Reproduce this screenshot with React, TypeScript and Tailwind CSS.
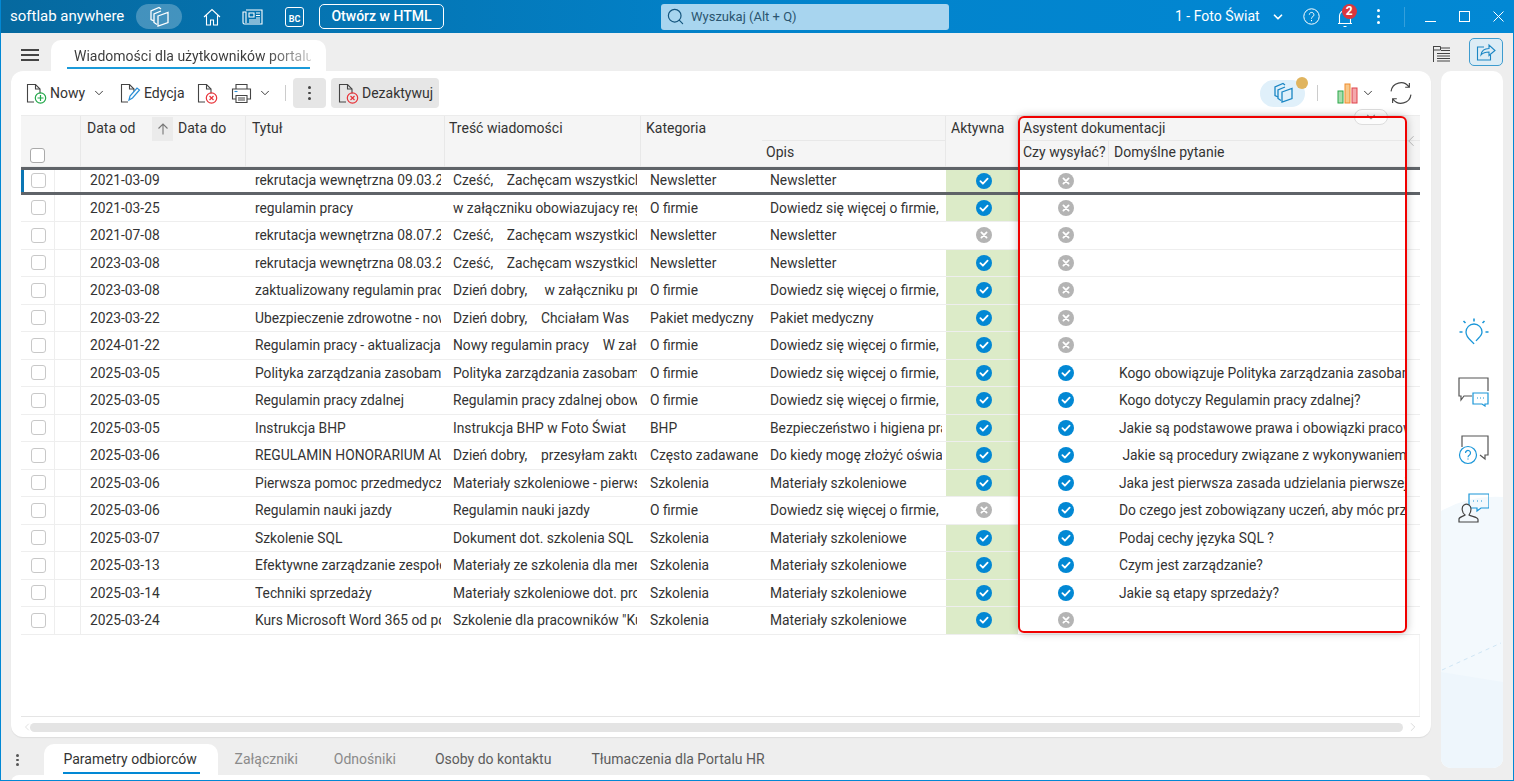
import { ChevronDown, ChevronLeft, ChevronRight, Search } from "lucide-react";

type Row = {
  from: string;
  title: string;
  body: string;
  cat: string;
  desc: string;
  active: boolean;
  send: boolean;
  question: string;
};

const DOWIEDZ = "Dowiedz się więcej o firmie,";
const MATERIALY = "Materiały szkoleniowe";
const ZACHETA = "Cześć,    Zachęcam wszystkich do udziału";

const rows: Row[] = [
  { from: "2021-03-09", title: "rekrutacja wewnętrzna 09.03.2021", body: ZACHETA, cat: "Newsletter", desc: "Newsletter", active: true, send: false, question: "" },
  { from: "2021-03-25", title: "regulamin pracy", body: "w załączniku obowiazujacy regulamin pracy", cat: "O firmie", desc: DOWIEDZ, active: true, send: false, question: "" },
  { from: "2021-07-08", title: "rekrutacja wewnętrzna 08.07.2021", body: ZACHETA, cat: "Newsletter", desc: "Newsletter", active: false, send: false, question: "" },
  { from: "2023-03-08", title: "rekrutacja wewnętrzna 08.03.2023", body: ZACHETA, cat: "Newsletter", desc: "Newsletter", active: true, send: false, question: "" },
  { from: "2023-03-08", title: "zaktualizowany regulamin pracy", body: "Dzień dobry,     w załączniku przesyłam", cat: "O firmie", desc: DOWIEDZ, active: true, send: false, question: "" },
  { from: "2023-03-22", title: "Ubezpieczenie zdrowotne - nowa oferta", body: "Dzień dobry,    Chciałam Was", cat: "Pakiet medyczny", desc: "Pakiet medyczny", active: true, send: false, question: "" },
  { from: "2024-01-22", title: "Regulamin pracy - aktualizacja", body: "Nowy regulamin pracy    W załączniku", cat: "O firmie", desc: DOWIEDZ, active: true, send: false, question: "" },
  { from: "2025-03-05", title: "Polityka zarządzania zasobami", body: "Polityka zarządzania zasobami ludzkimi", cat: "O firmie", desc: DOWIEDZ, active: true, send: true, question: "Kogo obowiązuje Polityka zarządzania zasobami ludzkimi?" },
  { from: "2025-03-05", title: "Regulamin pracy zdalnej", body: "Regulamin pracy zdalnej obowiązuje", cat: "O firmie", desc: DOWIEDZ, active: true, send: true, question: "Kogo dotyczy Regulamin pracy zdalnej?" },
  { from: "2025-03-05", title: "Instrukcja BHP", body: "Instrukcja BHP w Foto Świat", cat: "BHP", desc: "Bezpieczeństwo i higiena pracy", active: true, send: true, question: "Jakie są podstawowe prawa i obowiązki pracownika?" },
  { from: "2025-03-06", title: "REGULAMIN HONORARIUM AUTORSKIEGO", body: "Dzień dobry,    przesyłam zaktualizowany", cat: "Często zadawane pytania", desc: "Do kiedy mogę złożyć oświadczenie", active: true, send: true, question: " Jakie są procedury związane z wykonywaniem pracy?" },
  { from: "2025-03-06", title: "Pierwsza pomoc przedmedyczna", body: "Materiały szkoleniowe - pierwsza pomoc", cat: "Szkolenia", desc: MATERIALY, active: true, send: true, question: "Jaka jest pierwsza zasada udzielania pierwszej pomocy?" },
  { from: "2025-03-06", title: "Regulamin nauki jazdy", body: "Regulamin nauki jazdy", cat: "O firmie", desc: DOWIEDZ, active: false, send: true, question: "Do czego jest zobowiązany uczeń, aby móc przystąpić?" },
  { from: "2025-03-07", title: "Szkolenie SQL", body: "Dokument dot. szkolenia SQL", cat: "Szkolenia", desc: MATERIALY, active: true, send: true, question: "Podaj cechy języka SQL ?" },
  { from: "2025-03-13", title: "Efektywne zarządzanie zespołem", body: "Materiały ze szkolenia dla menedżerów", cat: "Szkolenia", desc: MATERIALY, active: true, send: true, question: "Czym jest zarządzanie?" },
  { from: "2025-03-14", title: "Techniki sprzedaży", body: "Materiały szkoleniowe dot. procesu", cat: "Szkolenia", desc: MATERIALY, active: true, send: true, question: "Jakie są etapy sprzedaży?" },
  { from: "2025-03-24", title: "Kurs Microsoft Word 365 od podstaw", body: 'Szkolenie dla pracowników "Kurs', cat: "Szkolenia", desc: MATERIALY, active: true, send: false, question: "" },
];

const GRID = "grid w-[1399px] grid-cols-[33px_27px_93px_72px_199px_196px_121px_184px_72px_91px_311px]";

function Yes() {
  return (
    <svg width="16" height="16" viewBox="0 0 16 16">
      <circle cx="8" cy="8" r="8" fill="#0288d4" />
      <path d="M4.400 8.200l2.500 2.500 4.700-5" fill="none" stroke="#fff" strokeWidth="1.800" strokeLinecap="round" strokeLinejoin="round" />
    </svg>
  );
}

function No() {
  return (
    <svg width="16" height="16" viewBox="0 0 16 16">
      <circle cx="8" cy="8" r="8" fill="#b4b4b4" />
      <path d="M5.400 5.400l5.200 5.200M10.600 5.400l-5.200 5.200" fill="none" stroke="#fff" strokeWidth="1.800" strokeLinecap="round" />
    </svg>
  );
}

function DocIcon({ children }: { children?: React.ReactNode }) {
  return (
    <svg width="21" height="21" viewBox="0 0 21 21" fill="none" className="shrink-0">
      <path d="M8 19H1.500V1.500h8l4.500 4.500v4.500" stroke="#444" strokeWidth="1.100" />
      <path d="M9.500 1.500V6H14" stroke="#444" strokeWidth="1.100" />
      {children}
    </svg>
  );
}

const addBadge = (
  <g stroke="#22a84a" strokeWidth="1.200">
    <circle cx="14.500" cy="15" r="5.200" />
    <path d="M14.500 12v6M11.500 15h6" />
  </g>
);

const removeBadge = (
  <g stroke="#e8343a" strokeWidth="1.200">
    <circle cx="14.500" cy="15" r="5.200" />
    <path d="M12.500 13l4 4M16.500 13l-4 4" />
  </g>
);

function CubesIcon({ color, size = 22 }: { color: string; size?: number }) {
  return (
    <svg width={size} height={size} viewBox="0 0 22 22" fill="none" stroke={color} strokeWidth="1.300">
      <path d="M6 15L3 13.500V5l8-3.500 2 1.500" />
      <path d="M9 18.500L6 16.500V8l7-3" />
      <path d="M10 10l10-3.500v10L10 20z" />
    </svg>
  );
}

function TopBar() {
  return (
    <div className="flex h-[33px] shrink-0 items-center bg-gradient-to-r from-[#06699f] via-[#0283cb] to-[#0288d4] pl-[9px] text-white">
      <span className="w-[116px] text-[15px] whitespace-nowrap">softlab anywhere</span>
      <div className="ml-[10px] flex h-[25px] w-[46px] items-center justify-center rounded-full bg-white/25">
        <CubesIcon color="#ffffff" />
      </div>
      <svg width="18" height="18" viewBox="0 0 18 18" fill="none" stroke="#fff" strokeWidth="1.100" className="ml-[21px]">
        <path d="M1 9l8-7.500L17 9M3.500 7.500V17h4v-5h3v5h4V7.500" />
      </svg>
      <svg width="21" height="16" viewBox="0 0 21 16" fill="none" stroke="#fff" strokeWidth="1.100" className="ml-[21px]">
        <path d="M4 1h16v14H2.500A1.500 1.500 0 0 1 1 13.500V3h3v11" />
        <path d="M7 4h5v4H7zM14 4h4M14 6.500h4M14 9h4M7 11h11M7 13h11" />
      </svg>
      <div className="ml-[22px] flex h-[20px] w-[19px] items-end justify-center rounded-[3px] border border-white pb-px text-[9px] leading-[11px] font-bold">
        BC
      </div>
      <div className="ml-[15px] flex h-[25px] w-[125px] items-center justify-center rounded-[5px] border border-white text-[14px] font-medium whitespace-nowrap">
        Otwórz w HTML
      </div>
      <div className="ml-[217px] flex h-[26px] w-[288px] items-center rounded-[3px] bg-[#a8d5ef] pl-[5px] text-[13px] text-[#2b5570]">
        <Search size={19} strokeWidth={1.500} color="#14557e" />
        <span className="ml-[6px]">Wyszukaj (Alt + Q)</span>
      </div>
      <span className="ml-[226px] text-[14px] whitespace-nowrap">1 - Foto Świat</span>
      <ChevronDown size={14} strokeWidth={3} className="ml-[11px]" />
      <svg width="17" height="17" viewBox="0 0 17 17" fill="none" stroke="#fff" strokeWidth="1" className="ml-[18px]">
        <circle cx="8.500" cy="8.500" r="7.700" />
        <path d="M6.300 6.700a2.300 2.300 0 1 1 3.500 2c-.9.500-1.300 1-1.300 2M8.500 12v1.200" />
      </svg>
      <div className="relative ml-[17px] h-[18px] w-[16px]">
        <svg width="16" height="20" viewBox="0 0 16 20" fill="none" stroke="#fff" strokeWidth="1.100">
          <path d="M1 15.500h14M2.500 15.500V8a5.500 5.500 0 0 1 11 0v7.500M6.500 18.500h3" />
        </svg>
        <span className="absolute top-[-4px] left-[5px] flex h-[15px] w-[15px] items-center justify-center rounded-full bg-[#d9363e] text-[12px] leading-none font-bold">
          2
        </span>
      </div>
      <span className="ml-[24px] flex flex-col gap-[3px]">
        <i className="block h-[3px] w-[3px] rounded-full bg-white" />
        <i className="block h-[3px] w-[3px] rounded-full bg-white" />
        <i className="block h-[3px] w-[3px] rounded-full bg-white" />
      </span>
      <div className="ml-[24px] h-[20px] w-px bg-white/20" />
      <div className="mt-[9px] ml-[20px] h-px w-[11px] bg-white" />
      <div className="ml-[23px] h-[11px] w-[11px] border border-white" />
      <svg width="11" height="11" viewBox="0 0 11 11" stroke="#fff" strokeWidth="1" className="ml-[23px]">
        <path d="M.500.500l10 10M10.500.500l-10 10" />
      </svg>
    </div>
  );
}

function TabStrip() {
  return (
    <div className="flex h-[38px] shrink-0 items-end">
      <div className="mb-[10px] ml-[20px] flex w-[18px] flex-col gap-[3px]">
        <i className="block h-[2px] bg-[#444]" />
        <i className="block h-[2px] bg-[#444]" />
        <i className="block h-[2px] bg-[#444]" />
      </div>
      <div className="relative ml-[12px] h-[31px] w-[275px] rounded-t-[10px] bg-white pt-[6px] pl-[23px] text-[14px] text-[#3a3a3a]">
        <span className="block w-[237px] overflow-hidden bg-gradient-to-r from-[#3a3a3a] from-80% to-[#cccccc] bg-clip-text font-normal whitespace-nowrap text-transparent">
          Wiadomości dla użytkowników portalu
        </span>
        <div className="absolute bottom-[2px] left-[16px] h-[2px] w-[243px] bg-[#1a9ad9]" />
      </div>
      <svg width="19" height="18" viewBox="0 0 19 18" fill="none" stroke="#444" strokeWidth="1" className="mb-[8px] ml-[1106px]">
        <path d="M1.500 1v16M1.500 1.500h7v3.500h-7M9 3h9M9 5.500h9M5 8.500h13M5 11h13M5 13.500h13M5 16h13" />
      </svg>
      <div className="mb-[5px] ml-[18px] flex h-[28px] w-[34px] items-center justify-center rounded-[5px] border border-[#3e9ccf] bg-[#dcecf5]">
        <svg width="20" height="18" viewBox="0 0 20 18" fill="none" stroke="#1a86c4" strokeWidth="1.100">
          <path d="M8 4H1.500v13h13v-5" />
          <path d="M5 12c.5-4 3.500-6.500 8-6.500V2l6 5.500-6 5V9c-3.500 0-6 .8-8 3z" />
        </svg>
      </div>
    </div>
  );
}

function Toolbar() {
  return (
    <div className="flex h-[44px] shrink-0 items-center pl-[15px] text-[14px] text-[#333]">
      <DocIcon>{addBadge}</DocIcon>
      <span className="ml-[3px] w-[35px]">Nowy</span>
      <ChevronDown size={14} strokeWidth={1.600} className="ml-[7px]" />
      <div className="ml-[14px]">
        <DocIcon>
          <path d="M9 17l1-4 7-8 2.500 2-7 8z" fill="#fff" stroke="#2b8fd6" strokeWidth="1.200" />
        </DocIcon>
      </div>
      <span className="ml-[3px] w-[39px]">Edycja</span>
      <div className="ml-[14px]">
        <DocIcon>{removeBadge}</DocIcon>
      </div>
      <svg width="21" height="21" viewBox="0 0 21 21" fill="none" stroke="#444" strokeWidth="1.100" className="ml-[13px]">
        <path d="M5 6V1.500h11V6M5 16H1.500V6h18v10H16" />
        <path d="M5 12.500h11v7H5zM7 15h7M7 17h7" />
        <path d="M3.500 8.500h3" stroke="#2b8fd6" />
      </svg>
      <ChevronDown size={14} strokeWidth={1.600} className="ml-[6px]" />
      <div className="ml-[13px] h-[16px] w-px bg-[#ccc]" />
      <div className="ml-[7px] flex h-[30px] w-[33px] flex-col items-center justify-center gap-[3px] rounded-[4px] bg-[#e6e6e6]">
        <i className="block h-[2.500px] w-[2.500px] rounded-full bg-[#444]" />
        <i className="block h-[2.500px] w-[2.500px] rounded-full bg-[#444]" />
        <i className="block h-[2.500px] w-[2.500px] rounded-full bg-[#444]" />
      </div>
      <div className="ml-[5px] flex h-[30px] w-[108px] items-center rounded-[4px] bg-[#e6e6e6] pl-[7px]">
        <DocIcon>{removeBadge}</DocIcon>
        <span className="ml-[3px]">Dezaktywuj</span>
      </div>
      <div className="relative ml-[821px] flex h-[27px] w-[45px] items-center justify-center rounded-full bg-[#e0f0fa]">
        <CubesIcon color="#1a86c4" />
        <span className="absolute top-[-3px] right-[-3px] h-[12px] w-[12px] rounded-full bg-[#e0b45e]" />
      </div>
      <div className="ml-[12px] h-[16px] w-px bg-[#ccc]" />
      <svg width="21" height="21" viewBox="0 0 21 21" className="ml-[19px]">
        <rect x="1" y="8" width="5" height="12" fill="#a8dcae" stroke="#2aa84a" />
        <rect x="8" y="1" width="5" height="19" fill="#f8c88a" stroke="#ef8b2c" />
        <rect x="15" y="5" width="5" height="15" fill="#f3a8ac" stroke="#e0434a" />
      </svg>
      <ChevronDown size={14} strokeWidth={1.600} className="ml-[3px]" />
      <svg width="22" height="22" viewBox="0 0 21 21" fill="none" stroke="#444" strokeWidth="1.100" className="ml-[15px]">
        <path d="M1 9a9.500 9.500 0 0 1 17-4.500M18.500 1v4h-4M20 12a9.500 9.500 0 0 1-17 4.500M2.500 20v-4h4" />
      </svg>
    </div>
  );
}

function HeaderRow() {
  const cell = "flex border-[#e8e8e8] text-[14px] leading-[20px] text-[#333]";
  return (
    <div className={`${GRID} h-[52px] grid-rows-[25px_27px] border-y border-[#ececec] bg-[#f5f5f5]`}>
      <div className={`${cell} col-span-2 row-span-2 items-end border-r pb-[3px] pl-[9px]`}>
        <span className="mb-[2px] h-[15px] w-[15px] rounded-[3px] border border-[#aaa] bg-white" />
      </div>
      <div className={`${cell} row-span-2 pt-[2px] pl-[6px]`}>
        <span className="flex-1">Data od</span>
        <span className="mt-[-1px] mr-[1px] flex h-[24px] w-[21px] items-center justify-center bg-[#ebebeb]">
          <svg width="12" height="12" viewBox="0 0 12 12" fill="none" stroke="#777" strokeWidth="1.100">
            <path d="M6 11.500V1M1.500 5.500L6 1l4.500 4.500" />
          </svg>
        </span>
      </div>
      <div className={`${cell} row-span-2 border-r pt-[2px] pl-[4px]`}>Data do</div>
      <div className={`${cell} row-span-2 border-r pt-[2px] pl-[6px]`}>Tytuł</div>
      <div className={`${cell} row-span-2 border-r pt-[2px] pl-[4px]`}>Treść wiadomości</div>
      <div className={`${cell} row-span-2 pt-[2px] pl-[5px]`}>Kategoria</div>
      <div className="border-r border-b border-[#e8e8e8]" />
      <div className={`${cell} row-span-2 border-r pt-[2px] pl-[5px]`}>Aktywna</div>
      <div className={`${cell} col-span-2 border-b pt-[2px] pl-[5px]`}>Asystent dokumentacji</div>
      <div className={`${cell} col-start-8 row-start-2 border-r pt-[1px] pl-[4px]`}>Opis</div>
      <div className={`${cell} col-start-10 row-start-2 border-r pt-[1px] pl-[5px] whitespace-nowrap`}>Czy wysyłać?</div>
      <div className={`${cell} col-start-11 row-start-2 pt-[1px] pl-[5px]`}>Domyślne pytanie</div>
    </div>
  );
}

function TableRow({ row, selected }: { row: Row; selected: boolean }) {
  const text = `mr-[4px] flex items-center overflow-hidden whitespace-pre ${selected ? "" : "pt-px"}`;
  return (
    <div
      className={`${GRID} relative h-[27.500px] text-[13.800px] text-[#333] ${
        selected ? "border-y-[3px] border-[#5f6368]" : "border-b border-[#eeeeee]"
      }`}
    >
      {selected && <div className="absolute top-0 bottom-0 left-0 w-[3px] bg-[#0a76b4]" />}
      <div className="flex items-center pl-[10px]">
        <span className="h-[15px] w-[15px] rounded-[3px] border border-[#c8c8c8] bg-white" />
      </div>
      <div className="border-x border-[#eeeeee]" />
      <div className={`${text} pl-[9px]`}>{row.from}</div>
      <div />
      <div className={`${text} pl-[9px]`}>{row.title}</div>
      <div className={`${text} pl-[8px]`}>{row.body}</div>
      <div className={`${text} pl-[9px]`}>{row.cat}</div>
      <div className={`${text} pl-[8px]`}>{row.desc}</div>
      <div className={`flex items-center justify-center pl-[4px] ${row.active ? "bg-[#dcebc8]" : ""}`}>
        {row.active ? <Yes /> : <No />}
      </div>
      <div className="flex items-center justify-center pl-[5px]">{row.send ? <Yes /> : <No />}</div>
      <div className={`mr-[15px] flex items-center overflow-hidden pl-[10px] whitespace-pre ${selected ? "" : "pt-px"}`}>{row.question}</div>
    </div>
  );
}

function SidePanel() {
  return (
    <div className="relative ml-[10px] flex h-[697px] w-[62px] flex-col items-center overflow-hidden rounded-[10px] bg-white pt-[247px] pl-[3px]">
      <svg width="62" height="275" viewBox="0 0 62 275" className="absolute bottom-0 left-0">
        <path d="M0 18Q28 2 62 4V275H0z" fill="#f3f9fd" />
        <path d="M0 179L62 189V275H0z" fill="#eef6fc" />
        <path d="M1 177L60 150" stroke="#cfe6f5" strokeDasharray="4 4" fill="none" />
      </svg>
      <svg width="30" height="28" viewBox="0 0 30 28" fill="none" stroke="#1a96d8" strokeWidth="1.300" className="relative">
        <path d="M15 26c-1-3-8-5-8-12a8 8 0 1 1 16 0c0 4-4 6-6 9" />
        <path d="M15 .500v3M4.500 3l2 2M25.500 3l-2 2M.500 14h3M26.500 14h3" strokeWidth="1.600" />
      </svg>
      <svg width="31" height="30" viewBox="0 0 31 30" fill="none" strokeWidth="1.200" className="relative mt-[31px]">
        <path d="M14 19H6l-3 4v-4H1V1h29v13" stroke="#555" />
        <path d="M15 16h15v11h-3v2l-3-2h-9z" stroke="#1a96d8" fill="#fff" />
        <path d="M19 21h1M22 21h1M25 21h1" stroke="#1a96d8" />
      </svg>
      <svg width="31" height="30" viewBox="0 0 31 30" fill="none" strokeWidth="1.200" className="relative mt-[28px]">
        <path d="M4 12V1h26v19h-3v4l-5-4" stroke="#555" />
        <circle cx="10" cy="20" r="8.500" stroke="#1a96d8" fill="#fff" />
        <path d="M7.500 18a2.500 2.500 0 1 1 4 2c-1 .6-1.500 1-1.500 2.300M10 23.500v1" stroke="#1a96d8" />
      </svg>
      <svg width="31" height="30" viewBox="0 0 31 30" fill="none" strokeWidth="1.200" className="relative mt-[28px]">
        <path d="M11 1h20v14h-8l-4 3v-3h-8z" stroke="#1a96d8" />
        <path d="M15 8h1M19 8h1M23 8h1" stroke="#1a96d8" />
        <path d="M1 29v-3c0-2 4-2.500 6-4-3-2-4-8-1-10 3-2 7 0 7 4 0 2-.8 4.500-2 6 2 1.500 9 2 9 4.500V29z" stroke="#444" fill="#f3f9fd" />
      </svg>
    </div>
  );
}

function BottomTabs() {
  return (
    <div className="flex h-[31px] items-start text-[14px] font-[450]">
      <span className="mt-[10px] ml-[15px] flex flex-col gap-[2px]">
        <i className="block h-[2.500px] w-[2.500px] rounded-full bg-[#555]" />
        <i className="block h-[2.500px] w-[2.500px] rounded-full bg-[#555]" />
        <i className="block h-[2.500px] w-[2.500px] rounded-full bg-[#555]" />
      </span>
      <div className="relative ml-[25px] h-[31px] w-[174px] rounded-t-[10px] bg-white pt-[5px] pl-[20px] font-normal whitespace-nowrap text-[#333]">
        Parametry odbiorców
        <div className="absolute bottom-[1px] left-[19px] h-[2px] w-[137px] bg-[#0288d4]" />
      </div>
      <span className="mt-[5px] ml-[17px] font-normal whitespace-nowrap text-[#8a8a8a]">Załączniki</span>
      <span className="mt-[5px] ml-[36px] font-normal whitespace-nowrap text-[#8a8a8a]">Odnośniki</span>
      <span className="mt-[5px] ml-[39px] whitespace-nowrap text-[#5c5c5c]">Osoby do kontaktu</span>
      <span className="mt-[5px] ml-[40px] whitespace-nowrap text-[#5c5c5c]">Tłumaczenia dla Portalu HR</span>
    </div>
  );
}

export default function App() {
  return (
    <div className="flex h-[781px] w-[1514px] flex-col overflow-hidden border-x border-b border-[#0288d4] bg-[#eeeeee] font-['Roboto',sans-serif]">
      <TopBar />
      <TabStrip />
      <div className="flex flex-1 items-start pl-[10px]">
        <div className="flex flex-col">
          <div className="relative flex h-[666px] w-[1420px] flex-col rounded-[12px] bg-white shadow-[0_1px_1px_#dddddd]">
            <Toolbar />
            <div className="flex h-[601px] flex-col pl-[10px]">
              <HeaderRow />
              {rows.map((r, i) => (
                <TableRow key={i} row={r} selected={i === 0} />
              ))}
              <div className="w-[1399px] flex-1 border-r border-[#f4f4f4]" />
            </div>
            {/* scrollbar */}
            <div className="flex h-[21px] items-center pl-[10px]">
              <div className="flex h-full w-[1399px] items-center border-t border-[#e5e5e5] text-[#cccccc]">
                <ChevronLeft size={12} strokeWidth={1.200} className="mr-[-3px]" />
                <div className="h-[9px] w-[1373px] rounded-full bg-[#e4e4e4]" />
                <ChevronRight size={14} strokeWidth={1.200} className="ml-[3px]" />
              </div>
            </div>
            <div className="absolute top-[38px] left-[1343px] flex h-[16px] w-[34px] items-center justify-center rounded-full border border-[#dddddd] bg-white/70">
              <ChevronDown size={14} color="#999" />
            </div>
            {/* red frame drawn over the grid */}
            <div className="pointer-events-none absolute top-[45px] left-[1007px] h-[517px] w-[389px] rounded-[6px] border-2 border-[#f00000] shadow-[0_0_8px_rgba(0,0,0,0.25)]" />
            <ChevronLeft size={18} strokeWidth={1.200} color="#aaaaaa" className="absolute top-[61px] left-[1391px]" />
          </div>
          <div className="mt-[7px] ml-[-10px]">
            <BottomTabs />
          </div>
          <div className="h-[8px] rounded-t-[10px] bg-white" />
        </div>
        <SidePanel />
      </div>
    </div>
  );
}
